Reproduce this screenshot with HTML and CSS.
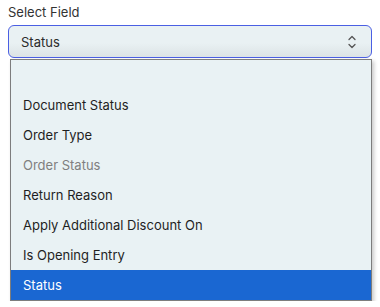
FILE: index.html
```html
<!DOCTYPE html>
<html>
<head>
<meta charset="utf-8">
<link rel="stylesheet" href="styles.css">
</head>
<body>
<div class="wrap">
  <div class="label">Select Field</div>
  <div class="field">
    <div class="select">
      <span class="value">Status</span>
      <svg class="chev" width="10" height="16" viewBox="0 0 10 16">
        <path d="M2 5.5 L5 2.5 L8 5.5" fill="none" stroke="#555" stroke-width="1.3" stroke-linecap="round" stroke-linejoin="round"/>
        <path d="M2 10.5 L5 13.5 L8 10.5" fill="none" stroke="#555" stroke-width="1.3" stroke-linecap="round" stroke-linejoin="round"/>
      </svg>
    </div>
    <div class="menu">
      <div class="item empty">&nbsp;</div>
      <div class="item">Document Status</div>
      <div class="item">Order Type</div>
      <div class="item disabled">Order Status</div>
      <div class="item">Return Reason</div>
      <div class="item">Apply Additional Discount On</div>
      <div class="item">Is Opening Entry</div>
      <div class="item selected">Status</div>
    </div>
  </div>
</div>
</body>
</html>
```
FILE: styles.css
```css
html, body {
  margin: 0;
  padding: 0;
  background: #ffffff;
}
body {
  font-family: Inter, "Noto Sans", sans-serif;
  font-size: 13px;
  color: #2b2b2b;
}
.wrap {
  padding: 2px 8px 0 8px;
}
.label {
  line-height: 20px;
  height: 20px;
  margin-bottom: 3px;
  color: #333;
}
.field {
  display: flex;
  flex-direction: column;
  gap: 1px;
}
.select {
  height: 33px;
  box-sizing: border-box;
  border: 1px solid #4b5fe3;
  border-radius: 6px;
  background: linear-gradient(to bottom, #e9f1f3 0%, #e9f1f3 55%, #dce3e5 100%);
  display: flex;
  align-items: center;
  justify-content: space-between;
  padding: 0 14px 0 12px;
}
.value {
  color: #2b2b2b;
}
.chev {
  display: block;
}
.menu {
  margin: 0 0 0 2px;
  background: #e9f2f4;
  border: 1px solid #7d7d7d;
  box-shadow: 2px 2px 4px rgba(0,0,0,0.22);
}
.item {
  height: 30px;
  box-sizing: border-box;
  padding: 1px 12px 0 12px;
  line-height: 29px;
  color: #1f1f1f;
}
.item.disabled {
  color: #7f7f7f;
}
.item.selected {
  background: #1a67d2;
  color: #ffffff;
}
```
